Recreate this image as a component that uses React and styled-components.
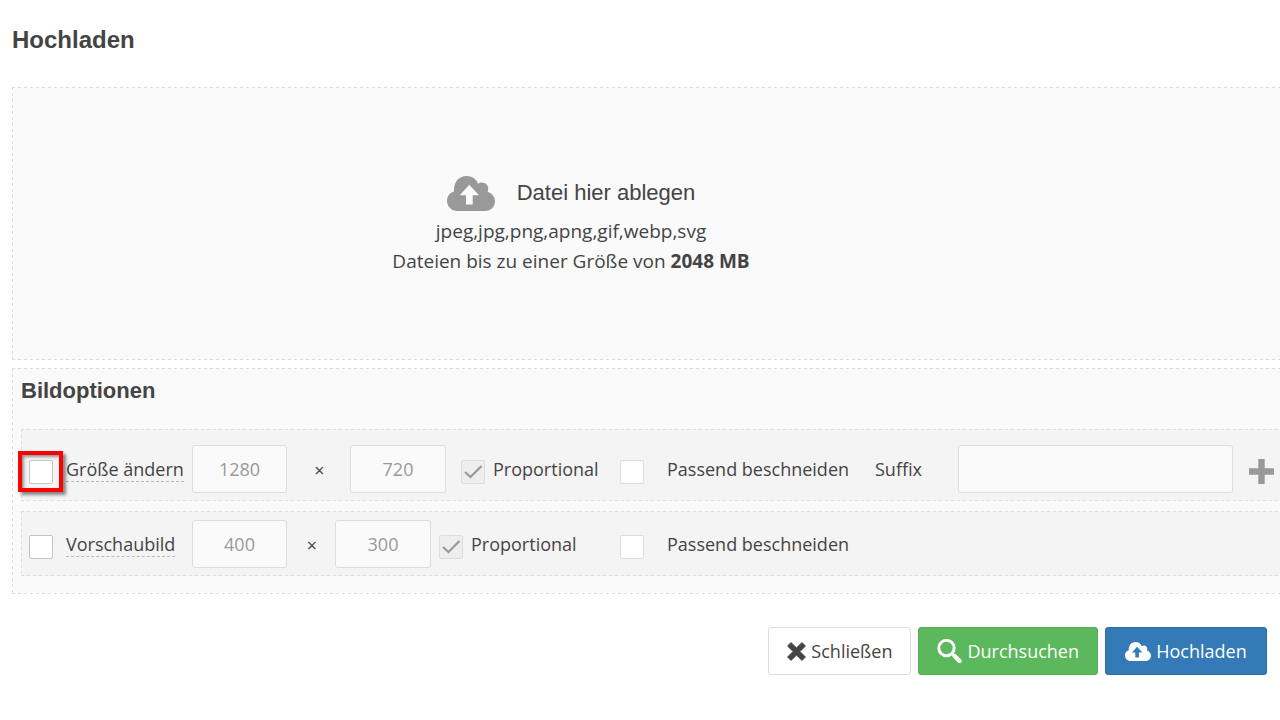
import React, { useId } from "react";
import styled, { createGlobalStyle, css } from "styled-components";

const GlobalStyle = createGlobalStyle`
  *, *::before, *::after { box-sizing: border-box; }
  body {
    margin: 0;
    background: #fff;
    color: #444;
    font: 18px/30px "Open Sans", "Noto Sans", sans-serif;
    overflow-x: hidden;
  }
`;

const Page = styled.main`
  padding: 24px 0 24px 12px;
`;

const Title = styled.h1`
  margin: 0 0 31px;
  font: bold 24px/32px "Liberation Sans", Arial, sans-serif;
`;

const dash = (angle) => `linear-gradient(${angle}, #ddd 50%, transparent 50%)`;

const panel = (fill) => css`
  border: 1px solid transparent;
  border-right: 0;
  background:
    ${dash("90deg")} left top / 6px 1px repeat-x border-box,
    ${dash("90deg")} left bottom / 6px 1px repeat-x border-box,
    ${dash("180deg")} left top / 1px 6px repeat-y border-box,
    ${fill} border-box;
`;

const DropZone = styled.section`
  ${panel("#fafafa")}
  display: flex;
  flex-direction: column;
  align-items: center;
  height: 273px;
  padding: 82px 151px 0 0;
  font-size: 19px;
`;

const DropHint = styled.div`
  display: flex;
  align-items: center;
  gap: 22px;
  height: 46px;
  font: 22px/32px "Liberation Sans", Arial, sans-serif;
`;

const IconSlot = styled.span`
  display: flex;
  color: #999;
`;

const DropText = styled.p`
  margin: 0;
`;

const Options = styled.section`
  ${panel("#fafafa")}
  display: flex;
  flex-direction: column;
  gap: 10px;
  margin-top: 8px;
  padding: 6px 0 17px 8px;
`;

const OptionsTitle = styled.h2`
  margin: 0 0 12px;
  font: bold 22px/32px "Liberation Sans", Arial, sans-serif;
`;

const OptionRow = styled.div`
  ${panel("#f4f4f4")}
  display: grid;
  grid-template-columns: ${(p) => p.$columns};
  align-items: center;
  padding: ${(p) => (p.$spacious ? "15px 0 7px 7px" : "8px 0 7px 7px")};
`;

const Field = styled.div`
  display: flex;
  align-items: center;
  gap: ${(p) => p.$gap}px;
  white-space: nowrap;
`;

const CheckFrame = styled.span`
  position: relative;
  display: flex;
  flex: none;
  margin-top: 6px;
  ${(p) =>
    p.$highlighted &&
    css`
      &::after {
        content: "";
        position: absolute;
        inset: -9px -10px -8px -11px;
        border: 4px solid #f00;
        box-shadow: 3px 3px 3px rgba(0, 0, 0, 0.45), inset 2px 2px 3px rgba(0, 0, 0, 0.4);
        pointer-events: none;
      }
    `}
`;

const CheckBox = styled.input`
  appearance: none;
  width: 24px;
  height: 24px;
  margin: 0;
  border: 1px solid ${(p) => (p.$strong ? "#c4c4c4" : "#ddd")};
  border-radius: 2px;
  background: #fff;
  &:disabled { background: #eee; }
`;

const Tick = styled.svg`
  position: absolute;
  inset: 0;
  width: 24px;
  height: 24px;
  pointer-events: none;
`;

const Caption = styled.label`
  ${(p) =>
    p.$hinted &&
    css`
      line-height: 24px;
      border-bottom: 1px dashed #bbb;
    `}
`;

const TextBox = styled.input`
  width: 100%;
  height: 48px;
  border: 1px solid #ddd;
  border-radius: 3px;
  background: #fafafa;
  color: #999;
  font: inherit;
  text-align: center;
`;

const Times = styled.span`
  padding: 2px 0 0 2px;
  text-align: center;
`;

const AddButton = styled.button`
  display: flex;
  justify-content: center;
  padding: 4px 0 0 10px;
  border: 0;
  background: none;
  color: #999;
`;

const Actions = styled.footer`
  display: flex;
  justify-content: flex-end;
  gap: 7px;
  margin-top: 33px;
  padding-right: 13px;
`;

const tones = {
  plain: { background: "#fff", border: "#ddd", color: "#444" },
  green: { background: "#5cb85c", border: "#55ad55", color: "#fff" },
  blue: { background: "#337ab7", border: "#2e6da4", color: "#fff", minWidth: "162px" },
};

const ActionButton = styled.button`
  display: flex;
  align-items: center;
  justify-content: center;
  gap: 5px;
  min-width: ${(p) => tones[p.$tone].minWidth || "0"};
  height: 48px;
  padding: 0 18px;
  border: 1px solid ${(p) => tones[p.$tone].border};
  border-radius: 3px;
  background: ${(p) => tones[p.$tone].background};
  color: ${(p) => tones[p.$tone].color};
  font: inherit;
`;

const CloudUpload = ({ width, height }) => (
  <svg width={width} height={height} viewBox="0 0 48 35" fill="currentColor" fillRule="evenodd" aria-hidden="true">
    <path d="M10.500 35C4.500 35 0 30.500 0 24.800C0 20 3 16.400 7 15.400C6.500 6.500 11.500 0 19.500 0C25 0 29.500 3 31 7.800C35.500 4.600 41.600 8 41.200 13C41.100 14.200 40.900 15 40.600 15.800C45 17.200 48 20.900 48 25.300C48 30.700 43.600 35 38.300 35ZM22.300 8.800L12.800 19.200H19V28.600H25.700V19.200H32Z" />
  </svg>
);

const Cross = () => (
  <svg width="19" height="19" viewBox="0 0 19 19" fill="currentColor" aria-hidden="true">
    <path d="M4 0.500L9.500 5.800L15 0.500L18.500 4L13 9.500L18.500 15L15 18.500L9.500 13.200L4 18.500L0.500 15L6 9.500L0.500 4Z" stroke="currentColor" strokeWidth="0.800" strokeLinejoin="round" />
  </svg>
);

const Magnifier = () => (
  <svg width="25" height="25" viewBox="0 0 25 25" fill="none" stroke="currentColor" aria-hidden="true">
    <circle cx="9.500" cy="9" r="7.700" strokeWidth="3" />
    <path d="M15 14.500L17.500 17" strokeWidth="3" />
    <path d="M17.800 17.300L22.500 22" strokeWidth="4.400" strokeLinecap="round" />
  </svg>
);

const Plus = () => (
  <svg width="25" height="25" viewBox="0 0 25 25" fill="currentColor" aria-hidden="true">
    <path d="M9.300 0H15.700V9.300H25V15.700H15.700V25H9.300V15.700H0V9.300H9.300Z" />
  </svg>
);

function CheckField({ label, gap, highlighted, hinted, strong, ticked }) {
  const id = useId();
  return (
    <Field $gap={gap}>
      <CheckFrame $highlighted={highlighted}>
        <CheckBox id={id} type="checkbox" $strong={strong} defaultChecked={ticked} disabled={ticked} />
        {ticked && (
          <Tick viewBox="0 0 24 24" fill="none" stroke="#999" strokeWidth="2.200" aria-hidden="true">
            <path d="M4 12L9.500 17L20.500 6" />
          </Tick>
        )}
      </CheckFrame>
      <Caption htmlFor={id} $hinted={hinted}>{label}</Caption>
    </Field>
  );
}

export default function App() {
  return (
    <>
      <GlobalStyle />
      <Page>
        <Title>Hochladen</Title>
        <DropZone>
          <DropHint>
            <IconSlot><CloudUpload width="48" height="35" /></IconSlot>
            Datei hier ablegen
          </DropHint>
          <DropText>jpeg,jpg,png,apng,gif,webp,svg</DropText>
          <DropText>Dateien bis zu einer Größe von <b>2048 MB</b></DropText>
        </DropZone>

        <Options>
          <OptionsTitle>Bildoptionen</OptionsTitle>
          <OptionRow $spacious $columns="163px 95px 63px 96px 15px 159px 255px 83px minmax(120px, 1fr) 47px">
            <CheckField label="Größe ändern" gap={13} highlighted hinted strong />
            <TextBox aria-label="Breite" defaultValue="1280" />
            <Times>×</Times>
            <TextBox aria-label="Höhe" defaultValue="720" />
            <span />
            <CheckField label="Proportional" gap={8} ticked />
            <CheckField label="Passend beschneiden" gap={23} />
            <Caption htmlFor="suffix">Suffix</Caption>
            <TextBox id="suffix" />
            <AddButton type="button" aria-label="Hinzufügen"><Plus /></AddButton>
          </OptionRow>
          <OptionRow $columns="163px 95px 48px 96px 8px 181px 1fr">
            <CheckField label="Vorschaubild" gap={13} hinted strong />
            <TextBox aria-label="Vorschau Breite" defaultValue="400" />
            <Times>×</Times>
            <TextBox aria-label="Vorschau Höhe" defaultValue="300" />
            <span />
            <CheckField label="Proportional" gap={8} ticked />
            <CheckField label="Passend beschneiden" gap={23} />
          </OptionRow>
        </Options>

        <Actions>
          <ActionButton type="button" $tone="plain"><Cross />Schließen</ActionButton>
          <ActionButton type="button" $tone="green"><Magnifier />Durchsuchen</ActionButton>
          <ActionButton type="button" $tone="blue"><CloudUpload width="26" height="19" />Hochladen</ActionButton>
        </Actions>
      </Page>
    </>
  );
}
